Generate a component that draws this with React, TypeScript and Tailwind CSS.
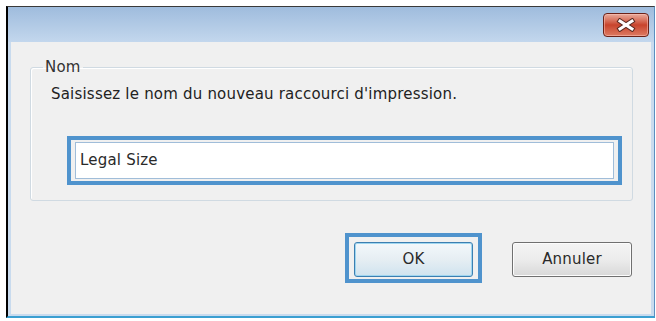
import React from "react";

const font = { fontFamily: '"DejaVu Sans", "Open Sans", sans-serif' };

function CloseGlyph() {
  return (
    <svg width="20" height="14" viewBox="0 0 20 14">
      <g strokeLinecap="square">
        <line x1="4" y1="3" x2="16" y2="11" stroke="#5a2a22" strokeWidth="5" />
        <line x1="16" y1="3" x2="4" y2="11" stroke="#5a2a22" strokeWidth="5" />
        <line x1="4" y1="3" x2="16" y2="11" stroke="#ffffff" strokeWidth="3" />
        <line x1="16" y1="3" x2="4" y2="11" stroke="#ffffff" strokeWidth="3" />
      </g>
    </svg>
  );
}

export default function App() {
  return (
    <div
      className="w-[656px] h-[321px] bg-white pt-[6px] pl-[6px] pr-[1px] pb-[3px] overflow-hidden"
      style={font}
    >
      <div className="flex flex-col h-full border-l-2 border-l-black border-t border-t-[#3a3a3a] border-r border-r-[#5a8fc0] border-b-2 border-b-[#3b9fd1]">
        {/* title bar */}
        <div className="h-[35px] shrink-0 flex justify-end items-start pt-[6px] pr-[5px] bg-gradient-to-b from-[#9fbcdd] to-[#c3d7ed]">
          <div className="w-[46px] h-[24px] rounded-[4px] border border-[#6b2218] flex items-center justify-center bg-gradient-to-b from-[#e8ab9c] via-[#c8432c] to-[#dd7a62] shadow-[inset_0_0_0_1px_rgba(255,200,190,0.5)]">
            <CloseGlyph />
          </div>
        </div>

        {/* body */}
        <div className="flex-1 flex flex-col bg-[#f0f0f0] border-l-[3px] border-r-[3px] border-b-2 border-[#c9dbee] pt-[16px] pl-[19px] pr-[16px] tracking-[0.2px]">
          <fieldset className="w-[603px] border border-[#d0dae2] rounded-[3px] pb-[15px] shadow-[inset_1px_1px_0_#ffffff]">
            <legend className="ml-[12px] px-[2px] text-[15px] leading-[18px] text-[#333]">
              Nom
            </legend>
            <div className="mt-[9px] ml-[20px] text-[15px] leading-[18px] text-[#222]">
              Saisissez le nom du nouveau raccourci d'impression.
            </div>
            <div className="mt-[33px] ml-[36px] w-[555px] border-4 border-[#4f93cd] px-[4px] py-[2px]">
              <div className="h-[37px] bg-white border border-[#a0bdd9] flex items-center pl-[4px] text-[15px] text-[#2a2a2a]">
                Legal Size
              </div>
            </div>
          </fieldset>

          <div className="mt-[32px] flex justify-end items-start gap-[30px] pr-[3px]">
            <div className="border-4 border-[#4f93cd] pt-[5px] pb-[2px] px-[5px]">
              <div className="w-[119px] h-[35px] rounded-[3px] border border-[#3c7fb1] flex items-center justify-center text-[15px] text-[#2a2a2a] bg-gradient-to-b from-[#f3f8fb] via-[#e6eef3] to-[#cfe3ef] shadow-[inset_0_0_0_1px_#9fd6f0]">
                OK
              </div>
            </div>
            <div className="mt-[9px] w-[120px] h-[35px] rounded-[3px] border border-[#707070] flex items-center justify-center text-[15px] text-[#2a2a2a] bg-gradient-to-b from-[#f4f4f4] via-[#ececec] to-[#d8d8d8] shadow-[inset_0_0_0_1px_#fcfcfc]">
              Annuler
            </div>
          </div>
        </div>
      </div>
    </div>
  );
}
